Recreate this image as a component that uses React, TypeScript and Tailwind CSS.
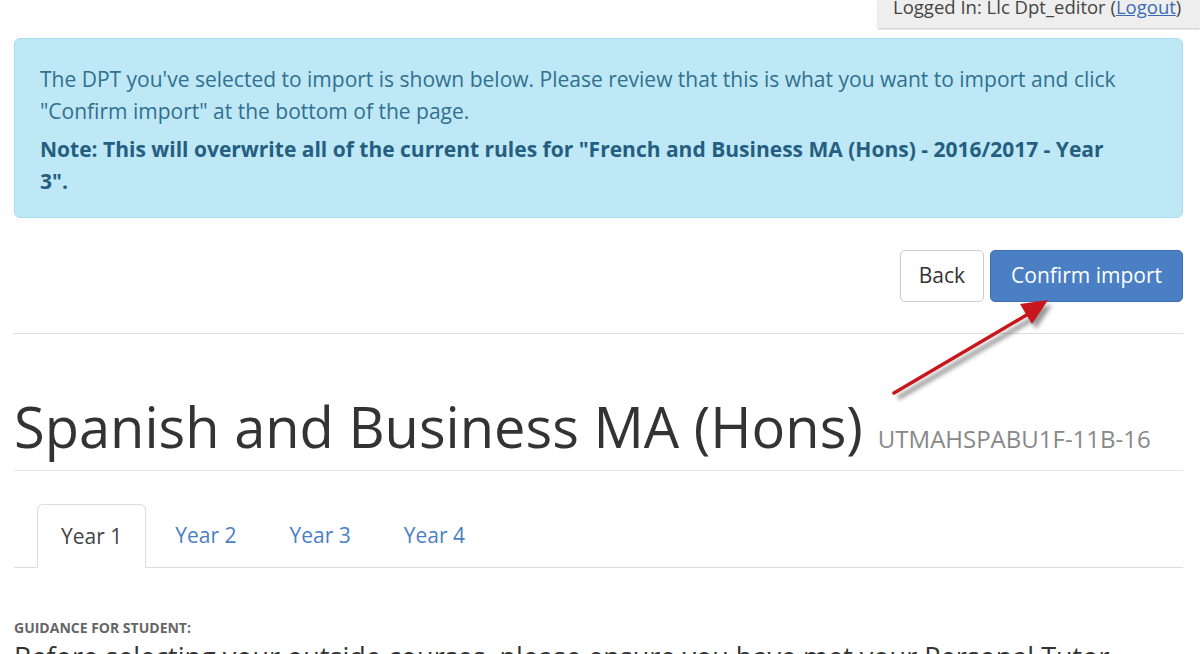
import React from "react";

export default function App() {
  return (
    <div className="relative min-h-screen overflow-hidden bg-white font-['Open_Sans',sans-serif] text-[#333]">
      <div className="flex justify-end">
        <div className="h-[28px] w-[322px] overflow-hidden bg-[#eeeeee] pl-[15px] shadow-[0_1px_2px_rgba(0,0,0,0.25)]">
          <p className="-mt-[9px] text-[18.5px] leading-[32px] text-[#444]">
            Logged In: Llc Dpt_editor (<a className="text-[#3a6bb5] underline">Logout</a>)
          </p>
        </div>
      </div>

      <div className="px-[14px] pr-[17px]">
        <div className="mt-[10px] rounded-[6px] border border-[#a8dded] bg-[#bee8f5] px-[25px] pb-[20px] pt-[24px] text-[21px] leading-[32px] text-[#31708f]">
          <p>
            The DPT you've selected to import is shown below. Please review that this is what you want to import and click
            <br />
            "Confirm import" at the bottom of the page.
          </p>
          <p className="mt-[6px] font-bold text-[#245e80]">
            Note: This will overwrite all of the current rules for "French and Business MA (Hons) - 2016/2017 - Year
            <br />
            3".
          </p>
        </div>

        <div className="mt-[32px] flex justify-end gap-[6px] pb-[31px]">
          <button className="h-[52px] rounded-[5px] border border-[#cccccc] bg-white px-[18px] text-[21px] text-[#333]">
            Back
          </button>
          <button className="h-[52px] rounded-[5px] border border-[#3d6fb0] bg-[#4a7fc4] px-[20px] text-[21px] text-white">
            Confirm import
          </button>
        </div>

        <div className="border-t border-[#dddddd]" />

        <div className="mt-[56px] flex items-baseline gap-[15px] border-b border-[#e6e6e6] pb-[8px]">
          <h1 className="text-[56px] leading-[72px] text-[#333]">Spanish and Business MA (Hons)</h1>
          <span className="text-[24px] text-[#888]">UTMAHSPABU1F-11B-16</span>
        </div>

        <div className="mt-[33px] flex border-b border-[#dddddd] pl-[23px] text-[21px]">
          <div className="-mb-px h-[64px] rounded-t-[6px] border border-b-white border-[#dddddd] bg-white px-[23px] leading-[62px] text-[#444]">
            Year 1
          </div>
          <div className="ml-[3px] h-[63px] px-[26px] leading-[62px] text-[#4a7fc4]">Year 2</div>
          <div className="ml-[1px] h-[63px] px-[26px] leading-[62px] text-[#4a7fc4]">Year 3</div>
          <div className="ml-[1px] h-[63px] px-[26px] leading-[62px] text-[#4a7fc4]">Year 4</div>
        </div>

        <p className="mt-[51px] text-[14px] font-bold uppercase leading-[18px] text-[#666]">Guidance for student:</p>
        <p className="mt-[3px] text-[27px] leading-[34px] text-[#333]">
          Before selecting your outside courses, please ensure you have met your Personal Tutor
        </p>
      </div>

      <svg className="pointer-events-none absolute left-[880px] top-[290px]" width="190" height="120" viewBox="0 0 190 120">
        <defs>
          <filter id="sh" x="-20%" y="-20%" width="140%" height="140%">
            <feGaussianBlur stdDeviation="2" />
          </filter>
        </defs>
        <g transform="translate(4,5)" filter="url(#sh)" opacity="0.6">
          <line x1="14" y1="103" x2="150" y2="23" stroke="#555" strokeWidth="4.5" />
          <polygon points="168,10 140,14 152,34" fill="#555" />
        </g>
        <line x1="14" y1="103" x2="150" y2="23" stroke="#c8171c" strokeWidth="3.5" strokeLinecap="round" />
        <polygon points="168,10 140,14 152,34" fill="#c8171c" />
      </svg>
    </div>
  );
}
